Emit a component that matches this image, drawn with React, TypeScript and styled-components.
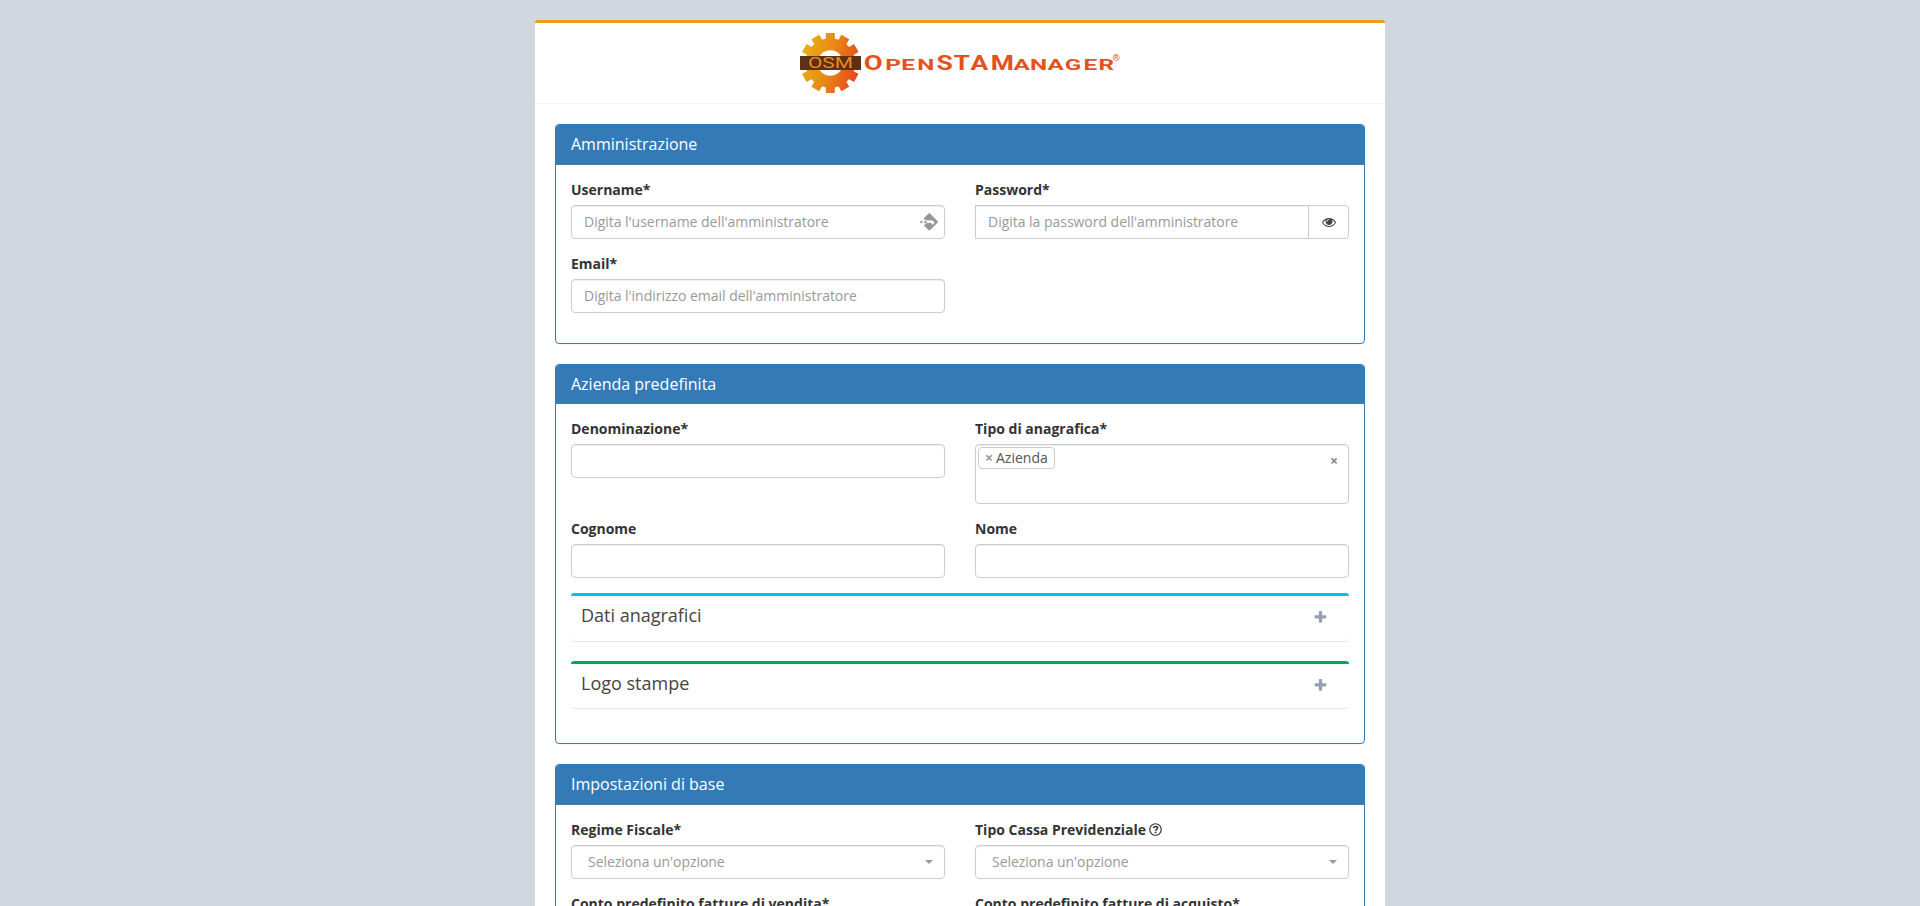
import React from "react";
import styled, { createGlobalStyle } from "styled-components";

const GlobalStyle = createGlobalStyle`
  *, *::before, *::after { box-sizing: border-box; }
  html, body { margin: 0; height: 100%; overflow: hidden; background: #d2d6de; }
  body { font: 14px/20px "Open Sans", "Noto Sans", sans-serif; color: #333; }
  input, button { font: inherit; }
`;

const Page = styled.div`
  height: 100vh;
  overflow: hidden;
  padding-top: 20px;
`;

const SetupBox = styled.main`
  width: 850px;
  margin: 0 auto;
  background: #fff;
  border-top: 3px solid #f39c12;
  border-radius: 3px;
  box-shadow: 0 1px 1px rgba(0, 0, 0, 0.1);
`;

const SetupHeader = styled.header`
  display: flex;
  justify-content: center;
  padding: 10px;
  border-bottom: 1px solid #f4f4f4;
`;

const Logo = styled.svg`
  display: block;
  width: 320px;
  height: 60px;
`;

const SetupBody = styled.div`
  padding: 20px;
`;

const Panel = styled.section`
  margin-bottom: 20px;
  border: 1px solid #337ab7;
  border-radius: 4px;
  background: #fff;
  box-shadow: 0 1px 1px rgba(0, 0, 0, 0.05);
`;

const PanelTitle = styled.h3`
  margin: 0;
  padding: 11px 15px 9px;
  background: #337ab7;
  border-bottom: 1px solid #4f76ae;
  border-radius: 3px 3px 0 0;
  color: #fff;
  font-size: 16px;
  font-weight: 400;
  line-height: 17.6px;
  height: 39.6px;
`;

const PanelBody = styled.div`
  padding: 15px;
`;

const FieldGrid = styled.div`
  display: grid;
  grid-template-columns: 1fr 1fr;
  column-gap: 30px;
`;

const FormGroup = styled.div`
  margin-bottom: 15px;
`;

const Label = styled.label`
  display: flex;
  align-items: center;
  gap: 3px;
  height: 20px;
  margin-bottom: 5px;
  font-weight: 700;
  white-space: nowrap;
`;

const InputGroup = styled.div`
  display: flex;
  position: relative;
`;

const Input = styled.input<{ $square?: boolean }>`
  flex: 1;
  min-width: 0;
  width: 100%;
  height: 34px;
  padding: 6px 12px;
  border: 1px solid #ccc;
  border-radius: ${(p) => (p.$square ? "0" : "4px")};
  background: #fff;
  box-shadow: inset 0 1px 1px rgba(0, 0, 0, 0.075);
  color: #555;
  letter-spacing: -0.025px;
  outline: none;
  &::placeholder { color: #999; opacity: 1; }
`;

const AutofillIcon = styled.svg`
  position: absolute;
  right: 7px;
  top: 8px;
  width: 18px;
  height: 18px;
`;

const EyeButton = styled.button`
  display: flex;
  align-items: center;
  justify-content: center;
  width: 41px;
  height: 34px;
  margin-left: -1px;
  padding: 0;
  border: 1px solid #ccc;
  border-radius: 0 4px 4px 0;
  background: #fff;
  color: #444;
`;

const Select = styled.div`
  display: flex;
  align-items: center;
  justify-content: space-between;
  height: 34px;
  padding: 0 11px 0 16px;
  border: 1px solid #ccc;
  border-radius: 4px;
  box-shadow: inset 0 1px 1px rgba(0, 0, 0, 0.075);
  color: #999;
  letter-spacing: -0.05px;
`;

const Caret = styled.span`
  border: 4px solid transparent;
  border-top-color: #999;
  border-bottom: 0;
`;

const TagSelect = styled.div`
  display: flex;
  align-items: flex-start;
  justify-content: space-between;
  height: 60px;
  padding: 2px 10px 0 2px;
  border: 1px solid #ccc;
  border-radius: 4px;
  box-shadow: inset 0 1px 1px rgba(0, 0, 0, 0.075);
`;

const Tag = styled.span`
  display: flex;
  gap: 3px;
  height: 22px;
  padding: 0 6px;
  border: 1px solid #ccc;
  border-radius: 4px;
  color: #555;
`;

const Cross = styled.span<{ $clear?: boolean }>`
  color: ${(p) => (p.$clear ? "#888" : "#999")};
  font-weight: 700;
  margin-top: ${(p) => (p.$clear ? "4px" : "0")};
`;

const CollapsedBox = styled.div<{ $accent: string }>`
  display: flex;
  align-items: flex-start;
  justify-content: space-between;
  height: 47.5px;
  margin-bottom: 20px;
  padding: 9px 21px 0 10px;
  border-top: 3px solid ${(p) => p.$accent};
  border-radius: 3px;
  box-shadow: 0 1px 1px rgba(0, 0, 0, 0.1);
  color: #444;
  font-size: 18px;
  line-height: 20px;
`;

const Icon = styled.svg<{ $top?: number }>`
  display: block;
  flex: none;
  margin-top: ${(p) => p.$top ?? 0}px;
`;

const TOOTH_ANGLES = [0, 30, 60, 90, 120, 150, 180, 210, 240, 270, 300, 330];

/* Letters of the wordmark are stretched horizontally and set at their own positions. */
function WideText({ children, at, size, stretch }: { children: string; at: number[]; size: number; stretch: number }) {
  return (
    <text
      y="37"
      x={at.map((x) => (x / stretch).toFixed(2)).join(" ")}
      fontSize={size}
      transform={`scale(${stretch} 1)`}
    >
      {children}
    </text>
  );
}

function OsmLogo() {
  return (
    <Logo viewBox="0 0 320 60" role="img" aria-label="OpenSTAManager">
      <defs>
        <linearGradient id="gear" gradientUnits="userSpaceOnUse" x1="4" y1="22" x2="57" y2="38">
          <stop offset="0" stopColor="#e9ae10" />
          <stop offset="0.5" stopColor="#e88616" />
          <stop offset="1" stopColor="#e84a1b" />
        </linearGradient>
        <mask id="gearShape">
          <g fill="#fff">
            <circle cx="30.3" cy="30" r="24.8" />
            {TOOTH_ANGLES.map((angle) => (
              <rect key={angle} x="25.8" y="0" width="9" height="12" transform={`rotate(${angle} 30.3 30)`} />
            ))}
          </g>
          <circle cx="30.3" cy="30" r="12.8" fill="#000" />
        </mask>
      </defs>
      <rect width="61" height="60" fill="url(#gear)" mask="url(#gearShape)" />
      <rect x="0" y="23" width="61" height="14" fill="#5d3116" />
      <g fontFamily="Roboto, sans-serif">
        <text x="8" y="35" fontSize="14" fontWeight="400" fill="#f08a1c" textLength="45" lengthAdjust="spacingAndGlyphs">OSM</text>
        <g fill="#e5501f" fontWeight="700">
          <WideText size={19.6} stretch={1.4} at={[63.8]}>O</WideText>
          <WideText size={15} stretch={1.62} at={[85.2, 101.2, 117.2]}>PEN</WideText>
          <WideText size={19.6} stretch={1.35} at={[136.6, 153.6, 170.6, 190.8]}>STAM</WideText>
          <WideText size={15} stretch={1.62} at={[213.6, 230, 247.4, 264.8, 283.5, 298.6]}>ANAGER</WideText>
        </g>
        <text x="312.6" y="27.5" fontSize="9.5" fill="#e5501f">®</text>
      </g>
    </Logo>
  );
}

function PlusIcon() {
  return (
    <Icon $top={5} width="15" height="15" viewBox="0 0 1792 1792" fill="#97a0b3">
      <path d="M1600 736v192q0 40-28 68t-68 28h-416v416q0 40-28 68t-68 28h-192q-40 0-68-28t-28-68v-416h-416q-40 0-68-28t-28-68v-192q0-40 28-68t68-28h416v-416q0-40 28-68t68-28h192q40 0 68 28t28 68v416h416q40 0 68 28t28 68z" />
    </Icon>
  );
}

function EyeIcon() {
  return (
    <Icon width="14" height="14" viewBox="0 0 1792 1792" fill="currentColor">
      <path d="M1664 960q-152-236-381-353 61 104 61 225 0 185-131.5 316.5t-316.5 131.5-316.5-131.5-131.5-316.5q0-121 61-225-229 117-381 353 133 205 333.5 326.5t434.5 121.5 434.5-121.5 333.5-326.5zm-720-384q0-20-14-34t-34-14q-125 0-214.5 89.5t-89.5 214.5q0 20 14 34t34 14 34-14 14-34q0-86 61-147t147-61q20 0 34-14t14-34zm848 384q0 34-20 69-140 230-376.5 368.5t-499.5 138.5-499.5-139-376.5-368q-20-35-20-69t20-69q140-229 376.5-368t499.5-139 499.5 139 376.5 368q20 35 20 69z" />
    </Icon>
  );
}

function HelpIcon() {
  return (
    <Icon width="13" height="13" viewBox="0 0 12 12" fill="none" stroke="#333">
      <circle cx="6" cy="6" r="5.3" strokeWidth="1.1" />
      <path d="M4.1 4.7C4.3 3.6 5 3.2 6 3.2c1.1 0 1.9.6 1.9 1.5C7.9 5.8 6.1 5.9 6.1 7.2" strokeWidth="1.4" />
      <path d="M6.1 8v1.4" strokeWidth="1.6" />
    </Icon>
  );
}

function PasswordManagerIcon() {
  return (
    <AutofillIcon viewBox="0 0 18 18" fill="#969696">
      <path d="M8.4 0.7Q9.3 0 10.2 0.7L17.5 8Q18.2 8.9 17.5 9.8L10.2 17Q9.3 17.7 8.4 17L4 12.6L5.6 10.8Q6.6 10.8 6.8 9.8H12.2V12.2L14.6 9.6L12.2 7.4H6.8Q6 6.6 4 6.6V5Z" fillRule="evenodd" />
      <path d="M7 8.6H12.4V11" fill="none" stroke="#fff" strokeWidth="1.8" />
      <circle cx="5.4" cy="9" r="1.3" />
      <circle cx="1.4" cy="9" r="1.2" />
    </AutofillIcon>
  );
}

function Field({ label, children }: { label: React.ReactNode; children?: React.ReactNode }) {
  return (
    <FormGroup>
      <Label>{label}</Label>
      {children}
    </FormGroup>
  );
}

function OptionSelect() {
  return (
    <Select role="combobox">
      <span>Seleziona un'opzione</span>
      <Caret />
    </Select>
  );
}

export default function App() {
  return (
    <Page>
      <GlobalStyle />
      <SetupBox>
        <SetupHeader>
          <OsmLogo />
        </SetupHeader>
        <SetupBody>
          <Panel>
            <PanelTitle>Amministrazione</PanelTitle>
            <PanelBody>
              <FieldGrid>
                <Field label="Username*">
                  <InputGroup>
                    <Input placeholder="Digita l'username dell'amministratore" />
                    <PasswordManagerIcon />
                  </InputGroup>
                </Field>
                <Field label="Password*">
                  <InputGroup>
                    <Input $square type="password" placeholder="Digita la password dell'amministratore" />
                    <EyeButton type="button" aria-label="Mostra password">
                      <EyeIcon />
                    </EyeButton>
                  </InputGroup>
                </Field>
                <Field label="Email*">
                  <InputGroup>
                    <Input placeholder="Digita l'indirizzo email dell'amministratore" />
                  </InputGroup>
                </Field>
              </FieldGrid>
            </PanelBody>
          </Panel>

          <Panel>
            <PanelTitle>Azienda predefinita</PanelTitle>
            <PanelBody>
              <FieldGrid>
                <Field label="Denominazione*">
                  <InputGroup>
                    <Input />
                  </InputGroup>
                </Field>
                <Field label="Tipo di anagrafica*">
                  <TagSelect>
                    <Tag>
                      <Cross>×</Cross>Azienda
                    </Tag>
                    <Cross $clear>×</Cross>
                  </TagSelect>
                </Field>
                <Field label="Cognome">
                  <InputGroup>
                    <Input />
                  </InputGroup>
                </Field>
                <Field label="Nome">
                  <InputGroup>
                    <Input />
                  </InputGroup>
                </Field>
              </FieldGrid>
              <CollapsedBox $accent="#00c0ef">
                Dati anagrafici
                <PlusIcon />
              </CollapsedBox>
              <CollapsedBox $accent="#00a65a">
                Logo stampe
                <PlusIcon />
              </CollapsedBox>
            </PanelBody>
          </Panel>

          <Panel>
            <PanelTitle>Impostazioni di base</PanelTitle>
            <PanelBody>
              <FieldGrid>
                <Field label="Regime Fiscale*">
                  <OptionSelect />
                </Field>
                <Field
                  label={
                    <>
                      Tipo Cassa Previdenziale
                      <HelpIcon />
                    </>
                  }
                >
                  <OptionSelect />
                </Field>
                <Field label="Conto predefinito fatture di vendita*">
                  <OptionSelect />
                </Field>
                <Field label="Conto predefinito fatture di acquisto*">
                  <OptionSelect />
                </Field>
              </FieldGrid>
            </PanelBody>
          </Panel>
        </SetupBody>
      </SetupBox>
    </Page>
  );
}
